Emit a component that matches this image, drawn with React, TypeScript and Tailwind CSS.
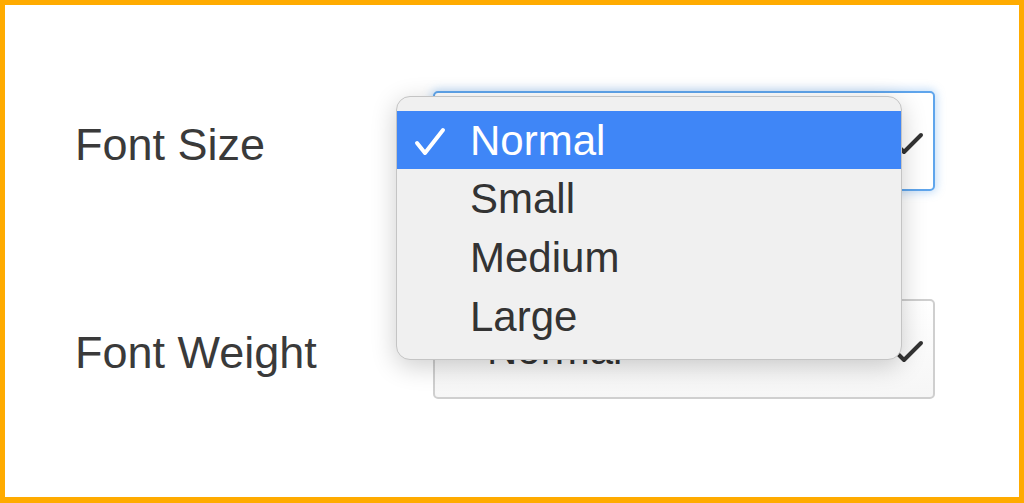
const items = ["Normal", "Small", "Medium", "Large"];

function Chevron() {
  return (
    <svg
      className="absolute left-[449px] top-[39px]"
      width="40"
      height="24"
      viewBox="0 0 40 24"
      fill="none"
    >
      <path d="M3 3 L20 20 L37 3" stroke="#333333" strokeWidth="4" strokeLinecap="round" strokeLinejoin="round" />
    </svg>
  );
}

function Check() {
  return (
    <svg className="absolute left-[17px] top-[15px]" width="32" height="32" viewBox="0 0 32 32" fill="none">
      <path d="M3 17 L11 27 L29 4" stroke="#ffffff" strokeWidth="4" strokeLinecap="round" strokeLinejoin="round" />
    </svg>
  );
}

export default function App() {
  return (
    <div
      className="w-[1024px] h-[503px] border-[5px] border-b-[6px] border-[#ffab00] bg-white pl-[70px] pt-[86px]"
      style={{ fontFamily: '"Liberation Sans", Arial, sans-serif' }}
    >
      <div className="flex flex-col gap-[108px]">
        <div className="flex items-center">
          <div className="w-[358px] mt-[8px] text-[45px] text-[#3a3a3a]">Font Size</div>
          <div className="relative z-10 w-[502px] h-[100px] rounded-[5px] border-2 border-[#5fa5ec] bg-white shadow-[0_0_8px_2px_rgba(90,160,235,0.35)]">
            <Chevron />
            <div className="absolute left-[-39px] top-[3px] w-[506px] h-[264px] rounded-[14px] border border-[#c4c4c4] bg-[#f0f0f0] pt-[14px] pb-[14px] shadow-[0_6px_26px_rgba(0,0,0,0.2)] overflow-hidden">
              {items.map((item, i) => (
                <div
                  key={item}
                  className={
                    i === 0
                      ? "relative h-[58px] flex items-center pl-[73px] bg-[#3f86f7] text-white text-[42px]"
                      : "relative h-[59px] flex items-center pl-[73px] text-[#333333] text-[42px]"
                  }
                >
                  {i === 0 && <Check />}
                  {item}
                </div>
              ))}
            </div>
          </div>
        </div>

        <div className="flex items-center">
          <div className="w-[358px] mt-[8px] text-[45px] text-[#3a3a3a]">Font Weight</div>
          <div className="relative w-[502px] h-[100px] rounded-[5px] border-2 border-[#cfcfcf] bg-gradient-to-b from-white to-[#f6f6f6] flex items-center pl-[52px] text-[42px] text-[#333333]">
            Normal
            <Chevron />
          </div>
        </div>
      </div>
    </div>
  );
}
